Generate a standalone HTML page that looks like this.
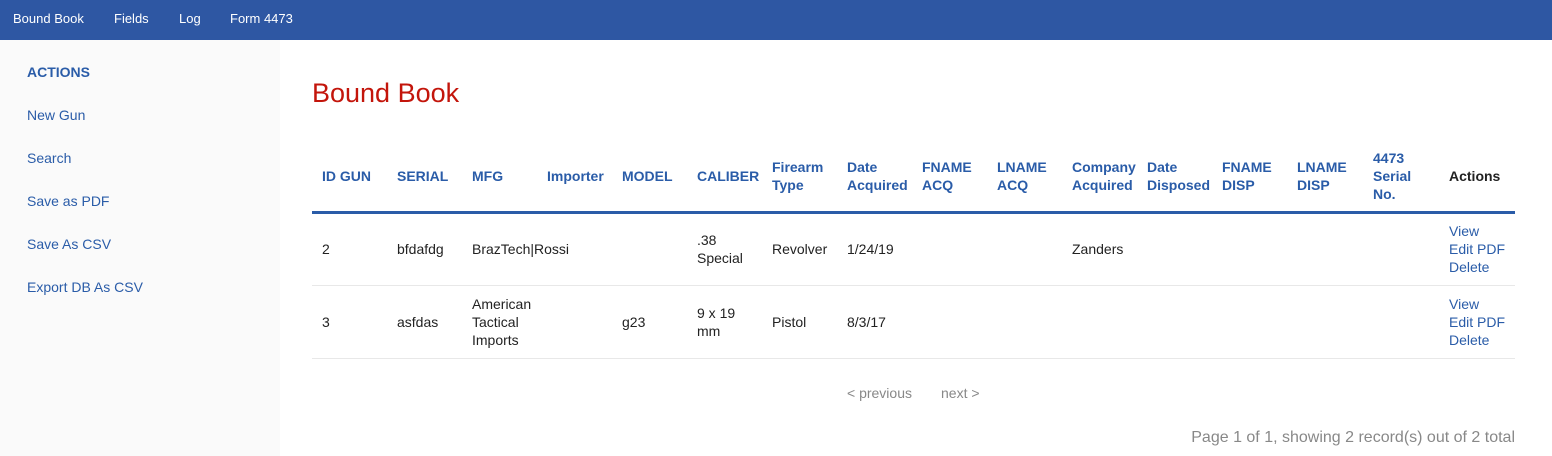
<!DOCTYPE html>
<html><head><meta charset="utf-8"><style>
*{box-sizing:border-box;margin:0;padding:0}
body{width:1552px;height:456px;overflow:hidden;font-family:"Liberation Sans",sans-serif;font-size:14px;color:#222;background:#fff;position:relative}
.nav{height:40px;background:#2e57a3;}
.nav span{position:absolute;top:11px;color:#fff;font-size:13px}
.side{position:absolute;left:0;top:40px;width:280px;height:416px;background:#fafafa}
.side div{position:absolute;left:27px;color:#2a5ca8;font-size:14px}
.side .h{font-weight:bold;text-transform:uppercase}
h1{position:absolute;left:312px;top:78px;font-weight:normal;font-size:27px;color:#c3150b}
table{position:absolute;left:312px;top:141px;width:1203px;border-collapse:collapse;table-layout:fixed}
th{height:71px;text-align:left;vertical-align:middle;padding:0 10px;color:#2a5ca8;font-size:14px;line-height:18px;border-bottom:3px solid #2a5ca8;font-weight:bold}
th.a{color:#222}
td{height:73px;padding:0 10px;vertical-align:middle;line-height:18px;border-bottom:1px solid #e8e8e8}
td a{color:#2a5ca8;text-decoration:none;display:block}
.pg{position:absolute;top:385px;color:#888;font-size:14px}
.ft{position:absolute;right:37px;top:429px;color:#888;font-size:16px}
</style></head><body>
<div class="nav"><span style="left:13px">Bound Book</span><span style="left:114px">Fields</span><span style="left:179px">Log</span><span style="left:230px">Form 4473</span></div>
<div class="side">
<div class="h" style="top:24px">Actions</div>
<div style="top:67px">New Gun</div>
<div style="top:110px">Search</div>
<div style="top:153px">Save as PDF</div>
<div style="top:196px">Save As CSV</div>
<div style="top:239px">Export DB As CSV</div>
</div>
<h1>Bound Book</h1>
<table>
<colgroup><col style="width:75px"><col style="width:75px"><col style="width:75px"><col style="width:75px"><col style="width:75px"><col style="width:75px"><col style="width:75px"><col style="width:75px"><col style="width:75px"><col style="width:75px"><col style="width:75px"><col style="width:75px"><col style="width:75px"><col style="width:76px"><col style="width:76px"><col style="width:76px"></colgroup>
<tr><th>ID GUN</th><th>SERIAL</th><th>MFG</th><th>Importer</th><th>MODEL</th><th>CALIBER</th><th>Firearm Type</th><th>Date Acquired</th><th>FNAME ACQ</th><th>LNAME ACQ</th><th>Company Acquired</th><th>Date Disposed</th><th>FNAME DISP</th><th>LNAME DISP</th><th>4473 Serial No.</th><th class="a">Actions</th></tr>
<tr><td>2</td><td>bfdafdg</td><td colspan="2">BrazTech|Rossi</td><td></td><td>.38 Special</td><td>Revolver</td><td>1/24/19</td><td></td><td></td><td>Zanders</td><td></td><td></td><td></td><td></td><td><a>View</a><a>Edit PDF</a><a>Delete</a></td></tr>
<tr><td>3</td><td>asfdas</td><td>American Tactical Imports</td><td></td><td>g23</td><td>9 x 19 mm</td><td>Pistol</td><td>8/3/17</td><td></td><td></td><td></td><td></td><td></td><td></td><td></td><td><a>View</a><a>Edit PDF</a><a>Delete</a></td></tr>
</table>
<div class="pg" style="left:847px">&lt; previous</div>
<div class="pg" style="left:941px">next &gt;</div>
<div class="ft">Page 1 of 1, showing 2 record(s) out of 2 total</div>
</body></html>
